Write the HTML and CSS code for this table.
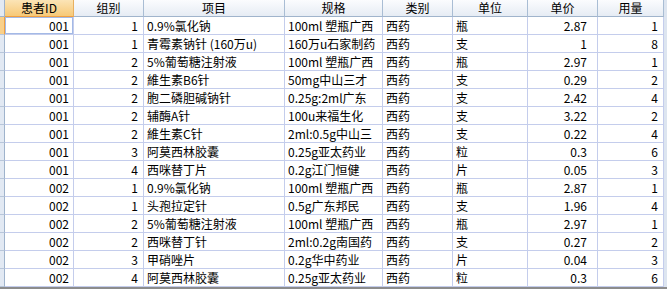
FILE: index.html
```html
<!DOCTYPE html>
<html>
<head>
<meta charset="utf-8">
<link rel="stylesheet" href="styles.css">
</head>
<body>
<div class="sheet">
  <div class="grid">
    <div class="hd sel"></div>
    <div class="hd active">患者ID</div>
    <div class="hd">组别</div>
    <div class="hd">项目</div>
    <div class="hd">规格</div>
    <div class="hd">类别</div>
    <div class="hd">单位</div>
    <div class="hd">单价</div>
    <div class="hd">用量</div>

    <div class="rs cur"></div><div class="c r id focus">001</div><div class="c r grp">1</div><div class="c">0.9%氯化钠</div><div class="c">100ml 塑瓶广西</div><div class="c">西药</div><div class="c">瓶</div><div class="c r price">2.87</div><div class="c r qty">1</div>
    <div class="rs"></div><div class="c r id">001</div><div class="c r grp">1</div><div class="c">青霉素钠针 (160万u)</div><div class="c">160万u石家制药</div><div class="c">西药</div><div class="c">支</div><div class="c r price">1</div><div class="c r qty">8</div>
    <div class="rs"></div><div class="c r id">001</div><div class="c r grp">2</div><div class="c">5%葡萄糖注射液</div><div class="c">100ml 塑瓶广西</div><div class="c">西药</div><div class="c">瓶</div><div class="c r price">2.97</div><div class="c r qty">1</div>
    <div class="rs"></div><div class="c r id">001</div><div class="c r grp">2</div><div class="c">維生素B6针</div><div class="c">50mg中山三才</div><div class="c">西药</div><div class="c">支</div><div class="c r price">0.29</div><div class="c r qty">2</div>
    <div class="rs"></div><div class="c r id">001</div><div class="c r grp">2</div><div class="c">胞二磷胆碱钠针</div><div class="c">0.25g:2ml广东</div><div class="c">西药</div><div class="c">支</div><div class="c r price">2.42</div><div class="c r qty">4</div>
    <div class="rs"></div><div class="c r id">001</div><div class="c r grp">2</div><div class="c">辅酶A针</div><div class="c">100u来福生化</div><div class="c">西药</div><div class="c">支</div><div class="c r price">3.22</div><div class="c r qty">2</div>
    <div class="rs"></div><div class="c r id">001</div><div class="c r grp">2</div><div class="c">維生素C针</div><div class="c">2ml:0.5g中山三</div><div class="c">西药</div><div class="c">支</div><div class="c r price">0.22</div><div class="c r qty">4</div>
    <div class="rs"></div><div class="c r id">001</div><div class="c r grp">3</div><div class="c">阿莫西林胶囊</div><div class="c">0.25g亚太药业</div><div class="c">西药</div><div class="c">粒</div><div class="c r price">0.3</div><div class="c r qty">6</div>
    <div class="rs"></div><div class="c r id">001</div><div class="c r grp">4</div><div class="c">西咪替丁片</div><div class="c">0.2g江门恒健</div><div class="c">西药</div><div class="c">片</div><div class="c r price">0.05</div><div class="c r qty">3</div>
    <div class="rs"></div><div class="c r id">002</div><div class="c r grp">1</div><div class="c">0.9%氯化钠</div><div class="c">100ml 塑瓶广西</div><div class="c">西药</div><div class="c">瓶</div><div class="c r price">2.87</div><div class="c r qty">1</div>
    <div class="rs"></div><div class="c r id">002</div><div class="c r grp">1</div><div class="c">头孢拉定针</div><div class="c">0.5g广东邦民</div><div class="c">西药</div><div class="c">支</div><div class="c r price">1.96</div><div class="c r qty">4</div>
    <div class="rs"></div><div class="c r id">002</div><div class="c r grp">2</div><div class="c">5%葡萄糖注射液</div><div class="c">100ml 塑瓶广西</div><div class="c">西药</div><div class="c">瓶</div><div class="c r price">2.97</div><div class="c r qty">1</div>
    <div class="rs"></div><div class="c r id">002</div><div class="c r grp">2</div><div class="c">西咪替丁针</div><div class="c">2ml:0.2g南国药</div><div class="c">西药</div><div class="c">支</div><div class="c r price">0.27</div><div class="c r qty">2</div>
    <div class="rs"></div><div class="c r id">002</div><div class="c r grp">3</div><div class="c">甲硝唑片</div><div class="c">0.2g华中药业</div><div class="c">西药</div><div class="c">片</div><div class="c r price">0.04</div><div class="c r qty">3</div>
    <div class="rs"></div><div class="c r id">002</div><div class="c r grp">4</div><div class="c">阿莫西林胶囊</div><div class="c">0.25g亚太药业</div><div class="c">西药</div><div class="c">粒</div><div class="c r price">0.3</div><div class="c r qty">6</div>
  </div>
</div>
</body>
</html>
```
FILE: styles.css
```css
html, body {
  margin: 0;
  padding: 0;
  background: #ffffff;
}
.sheet {
  width: 667px;
  background: #ffffff;
  font-family: "Noto Sans CJK SC", "Noto Sans", sans-serif;
  font-size: 12px;
  color: #000;
}
.grid {
  display: grid;
  grid-template-columns: 5px 69px 70px 141px 98px 70px 75px 70px 66px;
  grid-auto-rows: 18px;
  grid-template-rows: 17px;
  background: #dde5f0;
  border-bottom: 2px solid #8c8c8c;
  width: 667px;
}
.hd {
  box-sizing: border-box;
  border-right: 1px solid #a9bdd4;
  border-bottom: 1px solid #a0b4cc;
  background: linear-gradient(#fbfcfe, #e6ecf4);
  text-align: center;
  line-height: 16px;
  white-space: nowrap;
  overflow: hidden;
}
.hd.active {
  background: linear-gradient(#fbe4b6, #f7c977);
  border-bottom: 1px solid #f0a040;
  border-right: 1px solid #e8b060;
}
.hd.sel {
  background: #e2e9f3;
  border-right: 1px solid #9fb3cc;
}
.rs {
  box-sizing: border-box;
  background: #e2e9f3;
  border-right: 1px solid #9fb3cc;
  border-bottom: 1px solid #b8c6da;
}
.rs.cur {
  background: #f9d08a;
  border-right: 1px solid #f0a040;
}
.c {
  box-sizing: border-box;
  background: #ffffff;
  border-right: 1px solid #c4cdec;
  border-bottom: 1px solid #c4cdec;
  line-height: 17px;
  padding: 0 2px 0 3px;
  white-space: nowrap;
  overflow: hidden;
}
.c.r {
  text-align: right;
}
.c.id {
  padding-right: 4px;
}
.c.grp {
  padding-right: 5px;
}
.c.price {
  padding-right: 10px;
}
.c.qty {
  padding-right: 5px;
}
.c.focus {
  box-shadow: inset 0 0 0 1px #a3b9e6;
}
```
